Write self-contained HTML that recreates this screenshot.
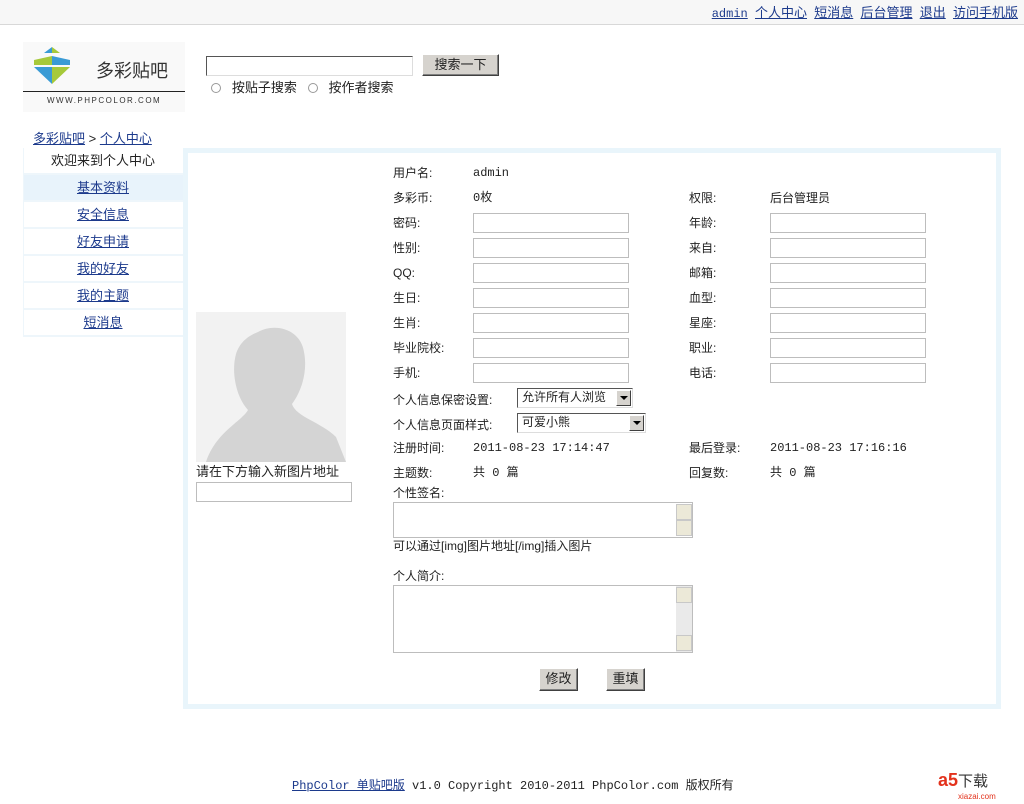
<!DOCTYPE html>
<html><head><meta charset="utf-8"><style>
*{margin:0;padding:0;box-sizing:border-box}
body{width:1024px;height:804px;background:#fff;font:12px "Liberation Sans","Noto Sans CJK SC",sans-serif;color:#222;position:relative;overflow:hidden}
.a{position:absolute;white-space:nowrap;line-height:14px}
a{color:#1c3a8c;text-decoration:underline}
.m{font-family:"Liberation Mono","Noto Sans CJK SC",monospace}
.in{position:absolute;border:1px solid #bdbdbd;background:#fff;height:20px}
.btn{position:absolute;background:#d6d3ce;border:1px solid;border-color:#fff #404040 #404040 #fff;box-shadow:inset -1px -1px 0 #808080;text-align:center;line-height:19px;font-size:13px}
.menu{position:absolute;left:23px;width:160px;height:27px;text-align:center;line-height:26px;border-bottom:2px solid #eef6fb;font-size:13px}
.sel{position:absolute;border:1px solid #555;border-right-color:#ddd;border-bottom-color:#ddd;background:#fff;height:20px;padding-left:4px;line-height:17px;font-size:12px}
.arr{position:absolute;right:1px;top:1px;width:15px;height:16px;background:#d6d3ce;border:1px solid;border-color:#fff #404040 #404040 #fff}
.arr:after{content:"";position:absolute;left:3px;top:5px;border:4px solid transparent;border-top:4px solid #000}
.ta{position:absolute;border:1px solid #bdbdbd;background:#fff}
.sb{position:absolute;right:0;top:0;bottom:0;width:16px;background:#eaeaea}
.sbb{position:absolute;right:0;width:16px;height:16px;background:#ece9d8;border:1px solid #c8c8c8}
.rd{display:inline-block;width:10px;height:10px;border:1px solid #999;border-radius:50%;vertical-align:-1px}
</style></head><body>
<div style="position:absolute;left:0;top:0;width:1024px;height:25px;background:#f7f7f7;border-bottom:1px solid #d8d8d8"></div>
<div class="a" style="right:6px;top:6px;font-size:13px"><a class="m" href="#" style="font-size:12px">admin</a>&nbsp; <a href="#">个人中心</a>&nbsp; <a href="#">短消息</a>&nbsp; <a href="#">后台管理</a>&nbsp; <a href="#">退出</a>&nbsp; <a href="#">访问手机版</a></div>

<div style="position:absolute;left:23px;top:42px;width:162px;height:70px;background:#f9f9f9"></div>
<svg style="position:absolute;left:30px;top:45px" width="46" height="42" viewBox="0 0 46 42">
<polygon points="22,2 14,8 22,8" fill="#3a9bd5"/><polygon points="22,2 30,8 22,8" fill="#a6c93a"/>
<polygon points="22,11 4,15 4,20 22,20" fill="#a6c93a"/><polygon points="22,11 40,15 40,20 22,20" fill="#3a9bd5"/>
<polygon points="4,22 22,22 22,39" fill="#3a9bd5"/><polygon points="40,22 22,22 22,39" fill="#a6c93a"/>
</svg>
<div class="a" style="left:96px;top:61px;font-size:18px;line-height:20px;color:#333">多彩贴吧</div>
<div style="position:absolute;left:23px;top:91px;width:162px;height:1px;background:#222"></div>
<div class="a" style="left:47px;top:94px;font-size:8px;letter-spacing:1.5px;color:#333">WWW.PHPCOLOR.COM</div>

<div class="in" style="left:206px;top:56px;width:207px;border-color:#555 #ddd #ddd #555"></div>
<div class="btn" style="left:422px;top:54px;width:77px;height:22px">搜索一下</div>
<div class="a" style="left:211px;top:81px;font-size:13px"><span class="rd"></span>&nbsp;&nbsp; 按贴子搜索 &nbsp;&nbsp;<span class="rd"></span>&nbsp;&nbsp; 按作者搜索</div>

<div class="a" style="left:33px;top:132px;font-size:13px"><a href="#">多彩贴吧</a> &gt; <a href="#">个人中心</a></div>
<div class="menu" style="top:148px;background:#fff">欢迎来到个人中心</div>
<div class="menu" style="top:175px;background:#e8f3fb"><a href="#">基本资料</a></div>
<div class="menu" style="top:202px"><a href="#">安全信息</a></div>
<div class="menu" style="top:229px"><a href="#">好友申请</a></div>
<div class="menu" style="top:256px"><a href="#">我的好友</a></div>
<div class="menu" style="top:283px"><a href="#">我的主题</a></div>
<div class="menu" style="top:310px"><a href="#">短消息</a></div>
<div style="position:absolute;left:23px;top:148px;width:1px;height:189px;background:#eef6fb"></div>

<div style="position:absolute;left:183px;top:148px;width:818px;height:561px;border:5px solid #e9f5fb"></div>

<svg style="position:absolute;left:196px;top:312px" width="150" height="150" viewBox="0 0 150 150">
<rect width="150" height="150" fill="#f2f2f2"/>
<path d="M62,20 C80,10 105,18 108,40 C112,60 105,80 96,92 C100,105 125,110 140,125 L150,150 L10,150 C20,120 45,110 52,98 C40,85 35,60 40,42 C44,30 52,24 62,20Z" fill="#d4d4d4"/>
</svg>
<div class="a" style="left:196px;top:465px;font-size:13px">请在下方输入新图片地址</div>
<div class="in" style="left:196px;top:482px;width:156px"></div>

<div class="a" style="left:393px;top:166px">用户名:</div><div class="a m" style="left:473px;top:166px">admin</div>
<div class="a" style="left:393px;top:191px">多彩币:</div><div class="a m" style="left:473px;top:191px">0枚</div>
<div class="a" style="left:689px;top:191px">权限:</div><div class="a" style="left:770px;top:191px">后台管理员</div>

<div class="a" style="left:393px;top:216px">密码:</div><div class="in" style="left:473px;top:213px;width:156px"></div>
<div class="a" style="left:689px;top:216px">年龄:</div><div class="in" style="left:770px;top:213px;width:156px"></div>
<div class="a" style="left:393px;top:241px">性别:</div><div class="in" style="left:473px;top:238px;width:156px"></div>
<div class="a" style="left:689px;top:241px">来自:</div><div class="in" style="left:770px;top:238px;width:156px"></div>
<div class="a" style="left:393px;top:266px">QQ:</div><div class="in" style="left:473px;top:263px;width:156px"></div>
<div class="a" style="left:689px;top:266px">邮箱:</div><div class="in" style="left:770px;top:263px;width:156px"></div>
<div class="a" style="left:393px;top:291px">生日:</div><div class="in" style="left:473px;top:288px;width:156px"></div>
<div class="a" style="left:689px;top:291px">血型:</div><div class="in" style="left:770px;top:288px;width:156px"></div>
<div class="a" style="left:393px;top:316px">生肖:</div><div class="in" style="left:473px;top:313px;width:156px"></div>
<div class="a" style="left:689px;top:316px">星座:</div><div class="in" style="left:770px;top:313px;width:156px"></div>
<div class="a" style="left:393px;top:341px">毕业院校:</div><div class="in" style="left:473px;top:338px;width:156px"></div>
<div class="a" style="left:689px;top:341px">职业:</div><div class="in" style="left:770px;top:338px;width:156px"></div>
<div class="a" style="left:393px;top:366px">手机:</div><div class="in" style="left:473px;top:363px;width:156px"></div>
<div class="a" style="left:689px;top:366px">电话:</div><div class="in" style="left:770px;top:363px;width:156px"></div>

<div class="a" style="left:393px;top:393px">个人信息保密设置:</div>
<div class="sel" style="left:517px;top:388px;width:116px">允许所有人浏览<div class="arr"></div></div>
<div class="a" style="left:393px;top:418px">个人信息页面样式:</div>
<div class="sel" style="left:517px;top:413px;width:129px">可爱小熊<div class="arr"></div></div>

<div class="a" style="left:393px;top:441px">注册时间:</div><div class="a m" style="left:473px;top:441px">2011-08-23 17:14:47</div>
<div class="a" style="left:689px;top:441px">最后登录:</div><div class="a m" style="left:770px;top:441px">2011-08-23 17:16:16</div>
<div class="a" style="left:393px;top:466px">主题数:</div><div class="a m" style="left:473px;top:466px">共 0 篇</div>
<div class="a" style="left:689px;top:466px">回复数:</div><div class="a m" style="left:770px;top:466px">共 0 篇</div>
<div class="a" style="left:393px;top:486px">个性签名:</div>
<div class="ta" style="left:393px;top:502px;width:300px;height:36px"><div class="sb" style="background:#fff"></div><div class="sbb" style="top:1px"></div><div class="sbb" style="bottom:1px"></div></div>
<div class="a" style="left:393px;top:539px">可以通过[img]图片地址[/img]插入图片</div>
<div class="a" style="left:393px;top:569px">个人简介:</div>
<div class="ta" style="left:393px;top:585px;width:300px;height:68px"><div class="sb"></div><div class="sbb" style="top:1px"></div><div class="sbb" style="bottom:1px"></div></div>

<div class="btn" style="left:539px;top:668px;width:39px;height:23px">修改</div>
<div class="btn" style="left:606px;top:668px;width:39px;height:23px">重填</div>

<div class="a m" style="left:292px;top:779px"><a href="#">PhpColor 单贴吧版</a> v1.0 Copyright 2010-2011 PhpColor.com 版权所有</div>
<div class="a" style="left:938px;top:770px;font-size:18px;line-height:20px;color:#e3321c;font-weight:bold">a5<span style="color:#333;font-weight:normal;font-size:15px">下载</span></div>
<div class="a" style="left:958px;top:790px;font-size:8px;color:#e3321c">xiazai.com</div>
</body></html>
